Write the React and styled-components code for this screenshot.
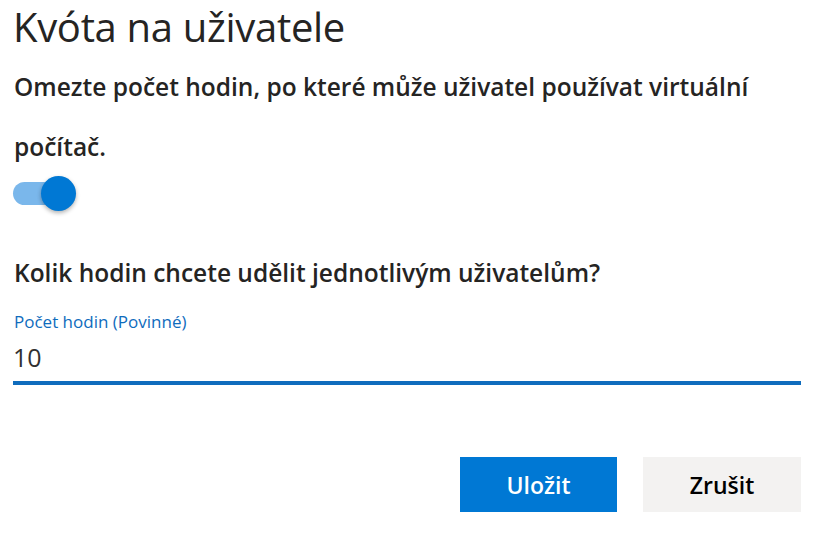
import React, { useState } from "react";
import styled, { createGlobalStyle } from "styled-components";

const Global = createGlobalStyle`
  body {
    margin: 0;
    background: #fff;
    font-family: "Open Sans", "Noto Sans", sans-serif;
    color: #323130;
  }
`;

const Panel = styled.div`
  width: 788px;
  padding: 0 0 0 13px;
  display: flex;
  flex-direction: column;
`;

const Title = styled.h1`
  margin: 0;
  font-size: 40px;
  font-weight: 400;
  line-height: 54px;
  color: #252423;
  letter-spacing: -0.3px;
`;

const Text = styled.p`
  margin: 3px 0 0 1px;
  font-size: 24.5px;
  font-weight: 600;
  line-height: 60px;
  color: #252423;
`;

const Track = styled.button`
  position: relative;
  width: 44px;
  height: 23px;
  margin-top: 5px;
  padding: 0;
  border: none;
  border-radius: 12px;
  background: ${p => (p.on ? "#7ab7eb" : "#c8c6c4")};
  cursor: pointer;
`;

const Knob = styled.span`
  position: absolute;
  top: -6px;
  left: ${p => (p.on ? "28px" : "-6px")};
  width: 35px;
  height: 35px;
  border-radius: 50%;
  background: #0078d4;
  box-shadow: 0 2px 4px rgba(0, 0, 0, 0.3);
`;

const Question = styled.h2`
  margin: 51px 0 0 1px;
  font-size: 24.5px;
  font-weight: 600;
  line-height: 34px;
  color: #252423;
`;

const Field = styled.label`
  display: flex;
  flex-direction: column;
  margin-top: 21px;
  border-bottom: 4px solid #0f6cbd;
`;

const FieldLabel = styled.span`
  margin-left: 1px;
  font-size: 17px;
  line-height: 22px;
  color: #0f6cbd;
`;

const Input = styled.input`
  border: none;
  outline: none;
  padding: 0;
  margin: 0;
  height: 48px;
  font-family: inherit;
  font-size: 25px;
  color: #323130;
  caret-color: #0f6cbd;
  background: transparent;
`;

const Actions = styled.div`
  display: flex;
  justify-content: flex-end;
  gap: 26px;
  margin-top: 72px;
`;

const Button = styled.button`
  width: ${p => (p.primary ? "157px" : "158px")};
  height: 55px;
  border: none;
  font-family: inherit;
  font-size: 23px;
  font-weight: 600;
  background: ${p => (p.primary ? "#0078d4" : "#f3f2f1")};
  color: ${p => (p.primary ? "#fff" : "#000")};
  cursor: pointer;
`;

export default function App() {
  const [on, setOn] = useState(true);
  const [hours, setHours] = useState("10");
  return (
    <Panel>
      <Global />
      <Title>Kvóta na uživatele</Title>
      <Text>Omezte počet hodin, po které může uživatel používat virtuální počítač.</Text>
      <Track on={on ? 1 : 0} onClick={() => setOn(!on)} aria-label="Kvóta">
        <Knob on={on ? 1 : 0} />
      </Track>
      <Question>Kolik hodin chcete udělit jednotlivým uživatelům?</Question>
      <Field>
        <FieldLabel>Počet hodin (Povinné)</FieldLabel>
        <Input value={hours} onChange={e => setHours(e.target.value)} autoFocus />
      </Field>
      <Actions>
        <Button primary>Uložit</Button>
        <Button>Zrušit</Button>
      </Actions>
    </Panel>
  );
}
